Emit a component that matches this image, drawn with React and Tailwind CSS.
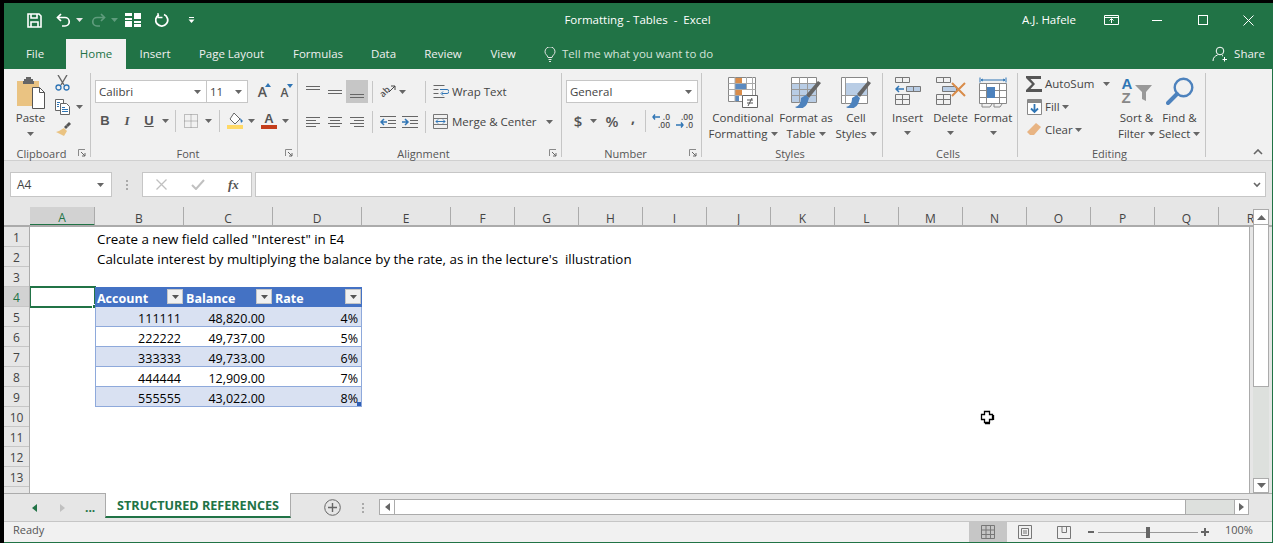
const ui = { fontFamily: '"Open Sans", "Noto Sans", sans-serif' };

const Caret = ({ color = '#666', className = '' }) => (
  <svg width="7" height="4" viewBox="0 0 7 4" className={className}><path d="M0 0h7L3.5 4z" fill={color} /></svg>
);

const Launcher = () => (
  <svg width="8" height="8" viewBox="0 0 8 8" className="shrink-0">
    <path d="M0.5 7V0.5H7" fill="none" stroke="#8a8a8a" />
    <path d="M3 3l4 4M7 4v3H4" fill="none" stroke="#666" />
  </svg>
);

const Sep = ({ className = 'h-[22px]' }) => <div className={`w-px bg-[#c6c6c6] shrink-0 ${className}`} />;

const Group = ({ width, label, launcher, children }) => (
  <div className={`${width} shrink-0 h-[84px] border-r border-[#c6c6c6] flex flex-col`}>
    <div className="flex-1 min-h-0">{children}</div>
    <div className="flex items-center h-[8px] pr-[4px] text-[11px] text-[#555] leading-none">
      <span className="flex-1 text-center">{label}</span>
      {launcher && <Launcher />}
    </div>
  </div>
);

const Lines = ({ rows, color = '#666' }) => (
  <svg width="14" height="14" viewBox="0 0 14 14">
    {rows.map(([x, y, w], i) => <path key={i} d={`M${x} ${y + 0.5}h${w}`} stroke={color} />)}
  </svg>
);

const IconBtn = ({ width, active, children }) => (
  <div className={`${width} h-[23px] flex items-center justify-center shrink-0 ${active ? 'bg-[#c6c6c6]' : ''}`}>{children}</div>
);

const BigLabel = ({ width, one, two, icon }) => (
  <div className={`${width} shrink-0 flex flex-col items-center`}>
    <div className="h-[31px] flex items-end justify-center">{icon}</div>
    <div className="text-[11.5px] leading-[16px] text-[#444] whitespace-nowrap mt-[2px]">{one}</div>
    <div className="text-[11.5px] leading-[16px] text-[#444] whitespace-nowrap flex items-center gap-[3px]">
      {two}<Caret />
    </div>
  </div>
);

const TitleBar = () => (
  <div className="h-[36px] flex items-center text-white pb-[2px]">
    <div className="flex items-center pl-[23px]">
      <svg width="15" height="15" viewBox="0 0 15 15" fill="none" stroke="#fff" strokeWidth="1.6"><path d="M1 1h11l2 2v11H1z" /><path d="M4 1v4h6V1M4 14V9h7v5" /></svg>
      <svg width="15" height="14" viewBox="0 0 15 14" fill="none" stroke="#fff" strokeWidth="1.7" className="ml-[14px]"><path d="M5 1L1.5 4.5 5 8" /><path d="M2 4.5h7a4 4 0 0 1 0 8.500H6" /></svg>
      <Caret color="#e6e6e6" className="ml-[5px]" />
      <svg width="15" height="14" viewBox="0 0 15 14" fill="none" stroke="#5f9c7d" strokeWidth="1.7" className="ml-[8px]"><path d="M10 1l3.500 3.500L10 8" /><path d="M13 4.500H6a4 4 0 0 0 0 8.500h3" /></svg>
      <Caret color="#5f9c7d" className="ml-[5px]" />
      <svg width="16" height="14" viewBox="0 0 16 14" fill="#fff" className="ml-[7px]"><path d="M0 0h7v3H0zM9 0h7v6H9zM0 5h7v2H0zM0 8h7v6H0zM9 8h7v2H9zM9 11h7v3H9z" /></svg>
      <svg width="14" height="14" viewBox="0 0 14 14" fill="none" stroke="#fff" strokeWidth="1.8" className="ml-[14px]"><path d="M9 1.500a6 6 0 1 1-5 .2" /><path d="M3 0v4.500h4.500" strokeWidth="1.300" /></svg>
      <svg width="7" height="6" viewBox="0 0 7 6" className="ml-[19px]"><path d="M1 0.500h5" stroke="#fff" /><path d="M0.500 2.500h6L3.500 6z" fill="#fff" /></svg>
    </div>
    <div className="flex-1 text-center text-[11.5px] whitespace-pre pl-[58px]">Formatting - Tables  -  Excel</div>
    <div className="text-[11.5px] w-[70px]">A.J. Hafele</div>
    <svg width="15" height="10" viewBox="0 0 15 10" fill="none" stroke="#fff" className="ml-[12px]"><path d="M.5.500h14v9H.5zM.5 2.500h14M7.500 8V4M5.500 5.500l2-2 2 2" /></svg>
    <div className="w-[10px] h-px bg-white ml-[33px]" />
    <div className="w-[10px] h-[10px] border border-white ml-[36px]" />
    <svg width="11" height="11" viewBox="0 0 11 11" stroke="#fff" className="ml-[35px] mr-[18px]"><path d="M.5.500l10 10M10.500.500l-10 10" /></svg>
  </div>
);

const tabs = [
  ['File', 'w-[62px]'],
  ['Home', 'w-[60px]'],
  ['Insert', 'w-[58px]'],
  ['Page Layout', 'w-[95px]'],
  ['Formulas', 'w-[78px]'],
  ['Data', 'w-[53px]'],
  ['Review', 'w-[66px]'],
  ['View', 'w-[54px]'],
];

const TabRow = () => (
  <div className="h-[30px] flex items-stretch text-[11.5px] text-[#f0f0f0]">
    {tabs.map(([name, w]) => (
      <div key={name} className={`${w} flex items-center justify-center ${name === 'Home' ? 'bg-[#f1f1f1] text-[#217346]' : ''}`}>{name}</div>
    ))}
    <div className="flex items-center ml-[14px] text-[#d3e3da] gap-[6px]">
      <svg width="12" height="15" viewBox="0 0 12 15" fill="none" stroke="#e6e6e6"><path d="M4 10.500C3.500 8 1 7.500 1 4.800a5 5 0 0 1 10 0C11 7.500 8.500 8 8 10.500zM4.500 12.500h3M5 14.500h2" /></svg>
      <span>Tell me what you want to do</span>
    </div>
    <div className="flex-1" />
    <div className="flex items-center gap-[6px] pr-[7px]">
      <svg width="16" height="16" viewBox="0 0 16 16" fill="none" stroke="#fff"><circle cx="8" cy="5" r="3.800" /><path d="M1 15c0-3.500 2-5 4.500-6M10 9.500l1 .5M12.500 11v4.500M10.500 13.500h4.500" /></svg>
      <span>Share</span>
    </div>
  </div>
);

const Clipboard = () => (
  <Group width="w-[86px]" label="Clipboard" launcher>
    <div className="flex">
      <div className="w-[48px] flex flex-col items-center pl-[5px]">
        <svg width="29" height="32" viewBox="0 0 29 32" className="mt-[4px]">
          <path d="M0 4h22v25H0z" fill="#eac382" />
          <path d="M7 4V2h2V0h5v2h2v2h1v3H6V4z" fill="#666" />
          <path d="M15.500 10.500h7l5 5v16h-12z" fill="#fff" stroke="#555" />
          <path d="M22.500 10.500v5h5" fill="none" stroke="#555" />
        </svg>
        <div className="text-[11.500px] leading-[16px] text-[#444] mt-[1px] -ml-[2px]">Paste</div>
        <Caret className="mt-[6px] -ml-[2px]" />
      </div>
      <div className="flex flex-col pt-[2px] pl-[2px]">
        <svg width="15" height="16" viewBox="0 0 15 16" fill="none"><path d="M3 0l6 10M12 0L6 10" stroke="#666" strokeWidth="1.400" /><circle cx="3.500" cy="12.500" r="2.500" stroke="#2f75b5" strokeWidth="1.300" /><circle cx="11.500" cy="12.500" r="2.500" stroke="#2f75b5" strokeWidth="1.300" /></svg>
        <div className="flex items-center mt-[8px]">
          <svg width="16" height="16" viewBox="0 0 16 16" fill="#fff" stroke="#666"><path d="M.5.500h8v11h-8z" /><path d="M5.500 4.500h6l3 3v8h-9z" /><path d="M7 8.500h3M7 10.500h6M7 12.500h6" stroke="#2f75b5" /><path d="M2 3.500h3M2 5.500h2M2 7.500h2" stroke="#2f75b5" /></svg>
          <Caret className="ml-[5px]" />
        </div>
        <svg width="16" height="15" viewBox="0 0 16 15" className="mt-[7px]"><path d="M9 6l3 3-3 5-8-4 3-1z" fill="#eac382" /><path d="M9 5l2-2 2 2-2 2z" fill="#555" /><path d="M11 3l3-3 2 2-3 3z" fill="#555" /></svg>
      </div>
    </div>
  </Group>
);

const Select = ({ width, text }) => (
  <div className={`${width} h-[23px] bg-white border border-[#c6c6c6] flex items-center justify-between pl-[3px] pr-[5px] text-[11.500px] text-[#444] shrink-0`}>
    <span>{text}</span><Caret />
  </div>
);

const Font = () => (
  <Group width="w-[207px]" label="Font" launcher>
    <div className="flex items-center pl-[4px] pt-[7px]">
      <Select width="w-[112px]" text="Calibri" />
      <Select width="w-[42px] -ml-px" text="11" />
      <div className="ml-[7px] w-[15px] flex justify-center relative text-[14px] font-semibold text-[#555]">A<svg width="6" height="4" viewBox="0 0 6 4" className="absolute -right-[1px] top-[2px]"><path d="M0 4h6L3 0z" fill="#2f75b5" /></svg></div>
      <div className="ml-[7px] w-[15px] flex justify-center relative text-[12px] font-semibold text-[#555] pt-[2px]">A<svg width="6" height="4" viewBox="0 0 6 4" className="absolute -right-[1px] top-[2px]"><path d="M0 0h6L3 4z" fill="#2f75b5" /></svg></div>
    </div>
    <div className="flex items-center pl-[9px] mt-[7px] text-[#555]" style={{ fontFamily: '"Liberation Sans", sans-serif' }}>
      <span className="w-[10px] text-center text-[13px] font-bold">B</span>
      <span className="ml-[12px] w-[10px] text-center text-[13px] italic font-bold" style={{ fontFamily: '"Liberation Serif", serif' }}>I</span>
      <span className="ml-[12px] w-[10px] text-center text-[13px] font-bold underline">U</span>
      <Caret className="ml-[8px]" />
      <Sep className="h-[22px] ml-[6px]" />
      <svg width="14" height="14" viewBox="0 0 14 14" className="ml-[8px]" fill="none" stroke="#888" strokeDasharray="1 1"><path d="M.5.500h13v13H.5zM7 .500v13M.5 7h13" /></svg>
      <Caret className="ml-[7px]" />
      <Sep className="h-[22px] ml-[7px]" />
      <svg width="17" height="16" viewBox="0 0 17 16" className="ml-[7px]"><path d="M7 0l6 6-5 5-5-5z" fill="#fff" stroke="#666" /><path d="M13 5l3 3-2 2z" fill="#2f75b5" /><path d="M0 12h16v4H0z" fill="#ffd966" /></svg>
      <Caret className="ml-[4px]" />
      <div className="ml-[6px] w-[16px] flex flex-col items-center">
        <span className="text-[13px] font-bold leading-[12px]">A</span>
        <div className="w-[16px] h-[4px] bg-[#c43e1c]" />
      </div>
      <Caret className="ml-[5px]" />
    </div>
  </Group>
);

const Alignment = () => (
  <Group width="w-[264px]" label="Alignment" launcher>
    <div className="flex items-center pl-[4px] pt-[7px]">
      <IconBtn width="w-[22px]"><Lines rows={[[0, 1, 14], [0, 4, 14]]} /></IconBtn>
      <IconBtn width="w-[22px]"><Lines rows={[[0, 5, 14], [0, 8, 14]]} /></IconBtn>
      <IconBtn width="w-[22px]" active><Lines rows={[[0, 9, 14], [0, 12, 14]]} /></IconBtn>
      <Sep className="h-[22px] ml-[4px]" />
      <div className="ml-[7px] w-[16px] h-[16px] flex items-center relative">
        <span className="text-[9px] font-semibold text-[#555] leading-none -rotate-45 -ml-[1px]">ab</span>
        <svg width="8" height="8" viewBox="0 0 8 8" fill="none" stroke="#444" className="absolute right-0 top-[1px]"><path d="M1 7l6-6M3 1h4v4" /></svg>
      </div>
      <Caret className="ml-[3px]" />
      <Sep className="h-[22px] ml-[19px]" />
      <svg width="16" height="16" viewBox="0 0 16 16" className="ml-[7px]" fill="none"><path d="M.5 1.500h11M.5 5.500h5M.5 9.500h5M.5 13.500h11" stroke="#666" /><path d="M9 9.500h5a1.500 1.500 0 0 0 0-4H7M10 7.500l-2 2 2 2" stroke="#2f75b5" /></svg>
      <span className="ml-[3px] text-[11.500px] text-[#444]">Wrap Text</span>
    </div>
    <div className="flex items-center pl-[4px] mt-[7px]">
      <IconBtn width="w-[22px]"><Lines rows={[[0, 2, 14], [0, 5, 10], [0, 8, 14], [0, 11, 10]]} /></IconBtn>
      <IconBtn width="w-[22px]"><Lines rows={[[0, 2, 14], [2, 5, 10], [0, 8, 14], [2, 11, 10]]} /></IconBtn>
      <IconBtn width="w-[22px]"><Lines rows={[[0, 2, 14], [4, 5, 10], [0, 8, 14], [4, 11, 10]]} /></IconBtn>
      <Sep className="h-[22px] ml-[4px]" />
      <svg width="16" height="12" viewBox="0 0 16 12" className="ml-[7px]" fill="none"><path d="M0 .500h16M8 4.500h8M8 7.500h8M0 11.500h16" stroke="#666" /><path d="M7 6H1M4 3L1 6l3 3" stroke="#2f75b5" strokeWidth="1.500" /></svg>
      <svg width="16" height="12" viewBox="0 0 16 12" className="ml-[6px]" fill="none"><path d="M0 .500h16M8 4.500h8M8 7.500h8M0 11.500h16" stroke="#666" /><path d="M0 6h6M3 3l3 3-3 3" stroke="#2f75b5" strokeWidth="1.500" /></svg>
      <Sep className="h-[22px] ml-[7px]" />
      <svg width="15" height="15" viewBox="0 0 15 15" className="ml-[7px]" fill="none" stroke="#777"><path d="M.5.500h14v14H.5zM.5 4.500h14M.5 10.500h14" /><path d="M3 7.500h9M5 5.500l-2 2 2 2M10 5.500l2 2-2 2" stroke="#2f75b5" /></svg>
      <span className="ml-[4px] text-[11.500px] text-[#444]">Merge &amp; Center</span>
      <Caret className="ml-[9px]" />
    </div>
  </Group>
);

const Number = () => (
  <Group width="w-[140px]" label="Number" launcher>
    <div className="pl-[4px] pt-[7px]">
      <Select width="w-[132px]" text="General" />
    </div>
    <div className="flex items-center pl-[11px] mt-[7px] text-[#555]">
      <span className="w-[10px] text-center text-[15px] font-semibold">$</span>
      <Caret className="ml-[7px]" />
      <span className="ml-[8px] w-[14px] text-center text-[15px] font-semibold">%</span>
      <span className="ml-[11px] w-[6px] text-center text-[14px] font-bold leading-[10px] pb-[6px]">,</span>
      <Sep className="h-[22px] ml-[9px]" />
      <div className="ml-[6px] w-[18px] flex flex-col items-end text-[8.500px] leading-[8px] text-[#555] font-semibold relative">
        <span>.0</span><span>.00</span>
        <svg width="8" height="6" viewBox="0 0 8 6" className="absolute left-0 top-[1px]" fill="none" stroke="#2f75b5" strokeWidth="1.400"><path d="M8 3H1M3 .500L1 3l2 2.500" /></svg>
      </div>
      <div className="ml-[6px] w-[17px] flex flex-col items-end text-[8.500px] leading-[8px] text-[#555] font-semibold relative">
        <span>.00</span><span>.0</span>
        <svg width="8" height="6" viewBox="0 0 8 6" className="absolute left-0 bottom-[1px]" fill="none" stroke="#2f75b5" strokeWidth="1.400"><path d="M0 3h7M5 .500L7 3 5 5.500" /></svg>
      </div>
    </div>
  </Group>
);

const CondIcon = (
  <svg width="30" height="31" viewBox="0 0 30 31" fill="none">
    <path d="M.5.500h27v24H.5z" fill="#fff" stroke="#888" />
    <path d="M7 1h7v6H7zM7 13h7v5H7z" fill="#d98c4a" />
    <path d="M7 7h11v5H7zM7 19h4v5H7z" fill="#5b8ac0" />
    <path d="M.5 6.500h27M.5 12.500h27M.5 18.500h27M7 0v25M18.500 0v12M24.500 0v25" stroke="#aaa" />
    <path d="M14.500 18.500h15v12h-15z" fill="#fff" stroke="#666" />
    <path d="M19 23h6M19 26h6M24 21l-4 8" stroke="#555" />
  </svg>
);
const TableIcon = (
  <svg width="30" height="31" viewBox="0 0 30 31" fill="none">
    <path d="M.5.500h25v25H.5z" fill="#fff" stroke="#888" />
    <path d="M1 6h24v19H1z" fill="#b9cde5" />
    <path d="M.5 6.500h25M.5 12.500h25M.5 18.500h25M8.500 0v26M16.500 0v26" stroke="#999" />
    <path d="M30 6l-12 15-3-3L27 4z" fill="#666" />
    <path d="M10 21l5-3 3 3-2 6a8 8 0 0 1-12 3c4-1 6-4 6-9z" fill="#4d82bd" />
  </svg>
);
const CellStyleIcon = (
  <svg width="30" height="31" viewBox="0 0 30 31" fill="none">
    <path d="M.5.500h26v26H.5z" fill="#fff" stroke="#888" />
    <path d="M4 6h22v12H4z" fill="#b9cde5" />
    <path d="M.5 18.500h26M4.500 0v27" stroke="#999" />
    <path d="M30 6L19 20l-3-3L27 4z" fill="#666" />
    <path d="M11 21l5-3 3 3-2 6a8 8 0 0 1-12 3c4-1 6-4 6-9z" fill="#4d82bd" />
  </svg>
);

const Styles = () => (
  <Group width="w-[181px]" label="Styles">
    <div className="flex pl-[5px] pt-[4px]">
      <BigLabel width="w-[72px]" one="Conditional" two="Formatting" icon={CondIcon} />
      <BigLabel width="w-[54px]" one="Format as" two="Table" icon={TableIcon} />
      <BigLabel width="w-[46px]" one="Cell" two="Styles" icon={CellStyleIcon} />
    </div>
  </Group>
);

const CellBtn = ({ width, icon, label }) => (
  <div className={`${width} shrink-0 flex flex-col items-center`}>
    <div className="h-[32px]">{icon}</div>
    <div className="text-[11.500px] leading-[16px] text-[#444] mt-[1px]">{label}</div>
    <Caret className="mt-[5px]" />
  </div>
);

const InsertIcon = (
  <svg width="26" height="28" viewBox="0 0 26 28" fill="none" stroke="#777">
    <path d="M.5.500h14v5H.5zM7.500 0v6" />
    <path d="M11.500 9.500h14v5h-14zM18.500 9v6" fill="#b9cde5" />
    <path d="M1 12h8M4 9l-3 3 3 3" stroke="#2f75b5" strokeWidth="1.500" />
    <path d="M.5 17.500h14v10H.5zM.5 22.500h14M7.500 17v11" />
  </svg>
);
const DeleteIcon = (
  <svg width="30" height="28" viewBox="0 0 30 28" fill="none" stroke="#777">
    <path d="M.5.500h14v5H.5zM7.500 0v6" />
    <path d="M6.500 9.500h14v5h-14z" fill="#b9cde5" />
    <path d="M.5 17.500h14v10H.5zM.5 22.500h14M7.500 17v11" />
    <path d="M16 6l13 13M29 6L16 19" stroke="#d98c4a" strokeWidth="2" />
  </svg>
);
const FormatIcon = (
  <svg width="28" height="32" viewBox="0 0 28 32" fill="none" stroke="#888">
    <path d="M1 .500v5M27 .500v5M2 3h24" stroke="#2f75b5" />
    <path d="M4 2l-2 1 2 1M24 2l2 1-2 1" stroke="#2f75b5" />
    <path d="M.5 6.500h27v20H.5zM.5 13.500h27M.5 20.500h27M7.500 6v21M20.500 6v21" fill="#fff" />
    <path d="M8 10h8v11H8z" fill="#4d82bd" stroke="none" />
    <path d="M3 27v3h8l2-3M15 27v3h6l2-3" />
  </svg>
);

const Cells = () => (
  <Group width="w-[135px]" label="Cells">
    <div className="flex pl-[3px] pt-[4px]">
      <CellBtn width="w-[43px]" icon={InsertIcon} label="Insert" />
      <CellBtn width="w-[43px]" icon={DeleteIcon} label="Delete" />
      <CellBtn width="w-[42px]" icon={FormatIcon} label="Format" />
    </div>
  </Group>
);

const Editing = () => (
  <Group width="w-[188px]" label="Editing">
    <div className="flex">
      <div className="w-[97px] pl-[8px] flex flex-col text-[11.500px] text-[#444]">
        <div className="h-[22px] flex items-center">
          <svg width="16" height="16" viewBox="0 0 16 16" fill="#555"><path d="M0 0h15v3H4.500L9 8l-4.500 5H16v3H0v-2l6-6-6-6z" /></svg>
          <span className="ml-[3px]">AutoSum</span>
          <Caret className="ml-[9px]" />
        </div>
        <div className="h-[23px] flex items-center">
          <svg width="15" height="16" viewBox="0 0 15 16" fill="none" className="ml-[1px]"><path d="M.5.500h14v15H.5z" fill="#fff" stroke="#888" /><path d="M1 1h13v3H1z" fill="#888" /><path d="M7.500 5v8M4 9.500l3.500 3.500L11 9.500" stroke="#2f75b5" strokeWidth="1.800" /></svg>
          <span className="ml-[3px]">Fill</span>
          <Caret className="ml-[2px]" />
        </div>
        <div className="h-[23px] flex items-center">
          <svg width="14" height="13" viewBox="0 0 14 13" className="ml-[1px]"><path d="M9 0l5 4-7 8H3l-3-3z" fill="#e8b483" /></svg>
          <span className="ml-[4px]">Clear</span>
          <Caret className="ml-[2px]" />
        </div>
      </div>
      <div className="w-[43px] flex flex-col items-center pt-[4px]">
        <div className="h-[29px] flex items-start" style={{ fontFamily: '"Liberation Sans", sans-serif' }}>
          <div className="flex flex-col text-[15px] font-bold leading-[14px] w-[13px]">
            <span className="text-[#2f75b5]">A</span>
            <span className="text-[#888]">Z</span>
          </div>
          <svg width="17" height="16" viewBox="0 0 17 16" className="mt-[8px]"><path d="M0 0h17l-6 7v9l-4-2V7z" fill="#999" /></svg>
        </div>
        <div className="text-[11.500px] leading-[16px] text-[#444] whitespace-nowrap mt-[4px]">Sort &amp;</div>
        <div className="text-[11.500px] leading-[16px] text-[#444] whitespace-nowrap flex items-center gap-[3px]">Filter<Caret /></div>
      </div>
      <div className="w-[43px] flex flex-col items-center pt-[4px]">
        <svg width="28" height="29" viewBox="0 0 28 29" fill="none" stroke="#4d82bd"><circle cx="17.500" cy="10.500" r="8.800" strokeWidth="2.400" /><path d="M11 17L2 26" strokeWidth="4" strokeLinecap="round" /></svg>
        <div className="text-[11.500px] leading-[16px] text-[#444] whitespace-nowrap mt-[4px]">Find &amp;</div>
        <div className="text-[11.500px] leading-[16px] text-[#444] whitespace-nowrap flex items-center gap-[3px]">Select<Caret /></div>
      </div>
    </div>
  </Group>
);

const Ribbon = () => (
  <div className="h-[92px] bg-[#f1f1f1] border-b border-[#d0d0d0] flex pt-[4px] pl-px">
    <Clipboard />
    <Font />
    <Alignment />
    <Number />
    <Styles />
    <Cells />
    <Editing />
    <div className="flex-1 flex items-end justify-end pr-[9px] pb-[5px]">
      <svg width="10" height="6" viewBox="0 0 10 6" fill="none" stroke="#666" strokeWidth="1.600"><path d="M1 5l4-4 4 4" /></svg>
    </div>
  </div>
);

const FormulaBar = () => (
  <div className="h-[46px] bg-[#e6e6e6] flex items-center px-[6px] pt-[1px]">
    <div className="w-[102px] h-[25px] bg-white border border-[#c6c6c6] flex items-center justify-between pl-[6px] pr-[7px] text-[12px] text-[#444]">
      <span>A4</span><Caret />
    </div>
    <div className="w-[30px] flex flex-col items-center gap-[2px]">
      <i className="w-[2px] h-[2px] bg-[#aaa]" /><i className="w-[2px] h-[2px] bg-[#aaa]" /><i className="w-[2px] h-[2px] bg-[#aaa]" />
    </div>
    <div className="w-[110px] h-[25px] bg-white border border-[#c6c6c6] flex items-center pl-[13px]">
      <svg width="11" height="11" viewBox="0 0 11 11" stroke="#c0c0c0" strokeWidth="1.300"><path d="M.5.500l10 10M10.500.500l-10 10" /></svg>
      <svg width="14" height="11" viewBox="0 0 14 11" fill="none" stroke="#c0c0c0" strokeWidth="2" className="ml-[24px]"><path d="M1 6l4 4 8-9" /></svg>
      <span className="ml-[23px] text-[13px] italic font-semibold text-[#555]" style={{ fontFamily: '"Liberation Serif", serif' }}>fx</span>
    </div>
    <div className="w-[3px]" />
    <div className="flex-1 h-[25px] bg-white border border-[#c6c6c6] flex items-center justify-end pr-[4px]">
      <svg width="8" height="6" viewBox="0 0 8 6" fill="none" stroke="#666" strokeWidth="1.600"><path d="M1 1l3 3 3-3" /></svg>
    </div>
  </div>
);

const columns = [
  ['A', 'w-[65px]'], ['B', 'w-[89px]'], ['C', 'w-[89px]'], ['D', 'w-[89px]'], ['E', 'w-[89px]'],
  ['F', 'w-[64px]'], ['G', 'w-[64px]'], ['H', 'w-[64px]'], ['I', 'w-[64px]'], ['J', 'w-[64px]'],
  ['K', 'w-[64px]'], ['L', 'w-[64px]'], ['M', 'w-[64px]'], ['N', 'w-[64px]'], ['O', 'w-[64px]'],
  ['P', 'w-[64px]'], ['Q', 'w-[64px]'], ['R', 'w-[64px]'],
];

const tableRows = [
  ['111111', '48,820.00', '4%'],
  ['222222', '49,737.00', '5%'],
  ['333333', '49,733.00', '6%'],
  ['444444', '12,909.00', '7%'],
  ['555555', '43,022.00', '8%'],
];

const FilterBtn = () => (
  <div className="absolute right-[1px] top-[2px] w-[16px] h-[15px] bg-[#f1f1f1] border border-[#c6c6c6] flex items-center justify-center">
    <Caret color="#555" />
  </div>
);

const Sheet = () => (
  <div className="flex-1 min-h-0 bg-white flex flex-col text-[12.500px] text-black">
    <div className="h-[20px] flex bg-[#e6e6e6] border-b-2 border-[#ababab] pl-[26px] pr-[18px] shrink-0">
      <div className="flex-1 min-w-0 flex overflow-hidden">
        {columns.map(([name, w]) => (
          <div key={name} className={`${w} shrink-0 h-[19px] flex items-center justify-center pt-[4px] text-[12px] border-r border-[#ababab] ${name === 'A' ? 'bg-[#d2d2d2] text-[#217346] border-b-2 border-b-[#217346]' : 'text-[#444]'}`}>{name}</div>
        ))}
      </div>
    </div>
    <div className="flex-1 flex min-h-0">
      <div className="w-[26px] shrink-0 bg-[#e6e6e6] border-r border-[#ababab] overflow-hidden">
        {[1, 2, 3, 4, 5, 6, 7, 8, 9, 10, 11, 12, 13].map((n) => (
          <div key={n} className={`h-[20px] flex items-center justify-center pt-[3px] text-[12px] border-b border-[#c6c6c6] ${n === 4 ? 'bg-[#d2d2d2] text-[#217346]' : 'text-[#444]'}`}>{n}</div>
        ))}
      </div>
      <div className="flex-1 min-w-0 overflow-hidden">
        <div className="h-[20px] pl-[67px] pt-[3px] flex items-center whitespace-pre text-[13.350px]">Create a new field called "Interest" in E4</div>
        <div className="h-[20px] pl-[67px] pt-[3px] flex items-center whitespace-pre text-[13.350px]">Calculate interest by multiplying the balance by the rate, as in the lecture's  illustration</div>
        <div className="h-[20px]" />
        <div className="flex h-[20px]">
          <div className="w-[65px] relative shrink-0">
            <div className="absolute -left-px -top-px w-[67px] h-[22px] border-2 border-[#217346]" />
            <div className="absolute -right-[2px] bottom-[-2px] w-[5px] h-[5px] bg-[#217346] border border-white" />
          </div>
          {['Account', 'Balance', 'Rate'].map((h) => (
            <div key={h} className="w-[89px] h-[20px] bg-[#4472c4] text-white font-bold pl-[2px] pt-[4px] flex items-center relative">
              {h}<FilterBtn />
            </div>
          ))}
        </div>
        {tableRows.map((row, i) => (
          <div key={row[0]} className="flex h-[20px]">
            <div className="w-[65px] shrink-0" />
            <div className={`w-[267px] flex border-x border-b border-[#8ea9db] relative ${i % 2 === 0 ? 'bg-[#d9e1f2]' : 'bg-white'}`}>
              <div className="w-[88px] text-right pr-[3px] pt-[2px] leading-[19px]">{row[0]}</div>
              <div className="w-[89px] text-right pr-[8px] pt-[2px] leading-[19px]">{row[1]}</div>
              <div className="w-[88px] text-right pr-[3px] pt-[2px] leading-[19px]">{row[2]}</div>
              {i === 4 && <div className="absolute right-0 bottom-0 w-[4px] h-[4px] bg-[#2f5fb5]" />}
            </div>
          </div>
        ))}
      </div>
      <div className="w-px bg-[#ababab] shrink-0" />
      <div className="w-[22px] shrink-0 bg-[#e6e6e6]" />
    </div>
  </div>
);

const VScroll = () => (
  <div className="absolute right-[3px] top-[206px] bottom-[50px] w-[16px] bg-[#dde0dd] flex flex-col">
    <div className="h-[16px] bg-white border border-[#ababab] flex items-center justify-center">
      <svg width="9" height="5" viewBox="0 0 9 5"><path d="M0 5h9L4.500 0z" fill="#666" /></svg>
    </div>
    <div className="h-[162px] bg-white border-x border-b border-[#ababab]" />
    <div className="flex-1" />
    <div className="h-[15px] bg-white border border-[#ababab] flex items-center justify-center">
      <svg width="9" height="5" viewBox="0 0 9 5"><path d="M0 0h9L4.500 5z" fill="#666" /></svg>
    </div>
  </div>
);

const SheetTabs = () => (
  <div className="h-[29px] bg-[#e6e6e6] border-b border-[#c6c6c6] flex shrink-0">
    <div className="w-[101px] flex items-center pl-[28px] border-t border-[#ababab]">
      <svg width="5" height="8" viewBox="0 0 5 8"><path d="M5 0v8L0 4z" fill="#217346" /></svg>
      <svg width="5" height="8" viewBox="0 0 5 8" className="ml-[23px]"><path d="M0 0v8l5-4z" fill="#c0c0c0" /></svg>
      <span className="ml-[20px] text-[12px] font-bold text-[#217346] leading-none">...</span>
    </div>
    <div className="w-[186px] h-[25px] bg-white border-x border-[#ababab] border-b-2 border-b-[#217346] flex items-center justify-center pt-[3px] text-[12.600px] font-bold text-[#217346] whitespace-nowrap">STRUCTURED REFERENCES</div>
    <div className="flex-1 flex items-center border-t border-[#ababab] min-w-0">
      <svg width="17" height="17" viewBox="0 0 17 17" fill="none" stroke="#666" className="ml-[33px]"><circle cx="8.500" cy="8.500" r="7.800" /><path d="M8.500 4v9M4 8.500h9" strokeWidth="1.400" /></svg>
      <div className="ml-[21px] flex flex-col gap-[2px]">
        <i className="w-[2px] h-[2px] bg-[#aaa]" /><i className="w-[2px] h-[2px] bg-[#aaa]" /><i className="w-[2px] h-[2px] bg-[#aaa]" />
      </div>
      <div className="ml-[15px] w-[870px] h-[16px] flex border border-[#ababab] bg-[#dde0dd] mb-[1px]">
        <div className="w-[15px] bg-white border-r border-[#ababab] flex items-center justify-center">
          <svg width="5" height="8" viewBox="0 0 5 8"><path d="M5 0v8L0 4z" fill="#666" /></svg>
        </div>
        <div className="w-[791px] bg-white border-r border-[#ababab]" />
        <div className="flex-1" />
        <div className="w-[14px] bg-white border-l border-[#ababab] flex items-center justify-center">
          <svg width="5" height="8" viewBox="0 0 5 8"><path d="M0 0v8l5-4z" fill="#666" /></svg>
        </div>
      </div>
    </div>
  </div>
);

const StatusBar = () => (
  <div className="h-[21px] bg-[#f1f1f1] border-b border-[#217346] flex items-center shrink-0 text-[11px] text-[#555]">
    <span className="pl-[9px] pb-[3px]">Ready</span>
    <div className="flex-1" />
    <div className="w-[38px] h-[20px] bg-[#c6c6c6] flex items-center justify-center">
      <svg width="14" height="14" viewBox="0 0 14 14" fill="none" stroke="#777"><path d="M.5.500h13v13H.5zM5 .500v13M9.500 .500v13M.5 5h13M.5 9.500h13" /></svg>
    </div>
    <svg width="14" height="14" viewBox="0 0 14 14" fill="none" stroke="#777" className="ml-[11px]"><path d="M.5.500h13v13H.5zM3.500 3.500h7v7h-7zM5 6h4M5 8h4" /></svg>
    <svg width="14" height="13" viewBox="0 0 14 13" fill="none" stroke="#777" className="ml-[25px]"><path d="M.5.500h13v12H.5zM5 .500v6h4.500v-6" /></svg>
    <div className="w-[6px] h-[2px] bg-[#666] ml-[17px]" />
    <div className="w-[100px] h-px bg-[#999] ml-[4px] flex justify-center items-center">
      <div className="w-[4px] h-[11px] bg-[#666]" />
    </div>
    <svg width="8" height="8" viewBox="0 0 8 8" stroke="#666" strokeWidth="2" className="ml-[3px]"><path d="M4 0v8M0 4h8" /></svg>
    <span className="ml-[16px] w-[47px] pb-[3px]">100%</span>
  </div>
);

const Cursor = () => (
  <svg width="15" height="15" viewBox="0 0 15 15" className="absolute left-[976px] top-[407px]">
    <path d="M4.500 1.500h5v3h3v5h-3v3h-5v-3h-3v-5h3z" fill="#fff" stroke="#000" strokeWidth="1.300" />
    <path d="M10 13.500h-5M13.500 10v-5" stroke="#000" strokeWidth="1.300" />
  </svg>
);

export default function App() {
  return (
    <div className="w-[1273px] h-[543px] bg-black pt-[3px] pl-[4px] overflow-hidden" style={ui}>
      <div className="relative w-[1269px] h-[540px] bg-[#217346] border-r border-[#217346] flex flex-col">
        <TitleBar />
        <TabRow />
        <Ribbon />
        <FormulaBar />
        <Sheet />
        <VScroll />
        <SheetTabs />
        <StatusBar />
        <Cursor />
      </div>
    </div>
  );
}
